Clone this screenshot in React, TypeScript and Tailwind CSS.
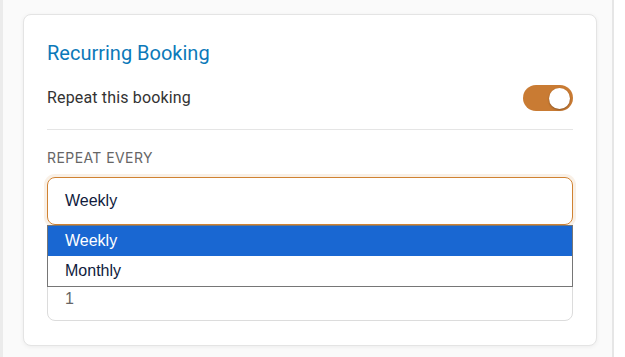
export default function App() {
  return (
    <div className="flex h-[357px] w-[625px] overflow-hidden bg-white font-['Roboto',sans-serif]">
      <div className="w-[3px] shrink-0 bg-[#ebebeb]" />
      <div className="w-[609px] shrink-0 bg-[#fafafa] pl-[20px] pt-[14px]">
        {/* Recurring card */}
        <div className="w-[574px] rounded-lg border border-[#e4e4e4] bg-white px-[23px] py-6 shadow-[0_1px_4px_rgba(0,0,0,0.06)]">
          <h2 className="text-[20px] leading-7 text-[#0c79b9]">
            Recurring Booking
          </h2>

          <div className="mt-[18px] flex items-center justify-between">
            <span className="text-[16px] tracking-[0.01em] text-[#333]">
              Repeat this booking
            </span>
            <div className="flex h-[26px] w-[50px] items-center justify-end rounded-full bg-[#c97b33] pr-[3px]">
              <div className="h-[21px] w-[21px] rounded-full bg-white shadow-[0_1px_2px_rgba(0,0,0,0.3)]" />
            </div>
          </div>

          <div className="mt-[18px] h-px bg-[#e5e5e5]" />

          <div className="mt-[18px] font-['Inter',sans-serif] text-[14px] leading-5 tracking-[0.03em] text-[#666] uppercase">
            Repeat every
          </div>

          <div className="relative mt-[9px]">
            <div className="flex h-[48px] items-center rounded-lg border border-[#d08232] px-[17px] font-['Liberation_Sans',sans-serif] text-[16px] text-[#0f1b3d] shadow-[0_0_0_3px_rgba(208,130,50,0.12)]">
              Weekly
            </div>

            {/* native dropdown list */}
            <div className="absolute top-[48px] left-0 z-10 w-full border border-[#767676] bg-white font-['Liberation_Sans',sans-serif] text-[16px]">
              <div className="flex h-[30px] items-center bg-[#1967d2] px-[17px] text-white">
                Weekly
              </div>
              <div className="flex h-[30px] items-center px-[17px] text-[#0f1b3d]">
                Monthly
              </div>
            </div>

            <div className="mt-[48px] flex h-[48px] items-center rounded-lg border border-[#dcdcdc] px-[17px] pt-[4px] font-['Liberation_Sans',sans-serif] text-[16px] text-[#666]">
              1
            </div>
          </div>
        </div>
      </div>
      <div className="w-[2px] shrink-0 bg-[#e6e6e6]" />
    </div>
  );
}
